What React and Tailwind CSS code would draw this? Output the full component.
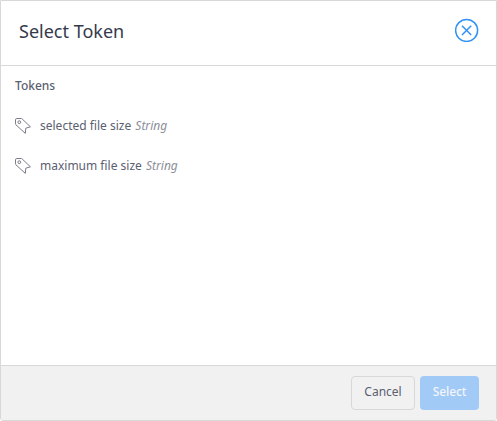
const tokens = [
  { name: 'selected file size', type: 'String' },
  { name: 'maximum file size', type: 'String' },
];

function TagIcon() {
  return (
    <svg className="size-4 shrink-0" viewBox="0 0 16 16" fill="none" stroke="#777b86" strokeWidth="1" strokeLinejoin="round">
      <path d="M0.5 1.8Q0.5 0.5 1.8 0.5H6.2Q6.7 0.5 7.1 0.9L15.4 8.8L10.8 10.2L10.3 15.4L1 6.9Q0.5 6.4 0.5 5.8Z" />
      <circle cx="4.3" cy="4.2" r="1.4" />
    </svg>
  );
}

function CloseIcon() {
  return (
    <svg className="size-6" viewBox="0 0 24 24" fill="none" stroke="#3193f5" strokeWidth="1.5">
      <circle cx="11.6" cy="12.4" r="11" />
      <path d="M7 7.8L16.2 17M16.2 7.8L7 17" />
    </svg>
  );
}

export default function App() {
  return (
    <div className="flex h-[421px] w-[497px] flex-col overflow-hidden rounded-b-[3px] border border-[#d8d8d8] bg-white font-['Noto_Sans',sans-serif] text-xs text-[#5b6070]">
      <header className="flex h-[65px] shrink-0 items-start justify-between border-b border-[#d8d8d8] pt-[17px] pr-[17px] pl-[18px]">
        <h1 className="text-lg leading-[26px] text-[#343a4c]">Select Token</h1>
        <button aria-label="Close"><CloseIcon /></button>
      </header>
      <main className="flex-1 pt-[11px] pl-3.5">
        <h2 className="mb-[11px] leading-[18px] font-medium">Tokens</h2>
        <ul>
          {tokens.map((token) => (
            <li key={token.name} className="flex h-10 items-center gap-[9px]">
              <TagIcon />
              <span>{token.name} <em className="ml-px text-[#8b8e97]">{token.type}</em></span>
            </li>
          ))}
        </ul>
      </main>
      <footer className="flex h-[55px] shrink-0 items-start justify-end gap-[5px] border-t border-[#d8d8d8] bg-[#f1f1f1] pt-2.5 pr-[17px]">
        <button className="h-[34px] w-16 rounded-[4px] border border-[#d8d8d8] pb-0.5">Cancel</button>
        <button className="h-[34px] w-[59px] rounded-[4px] bg-[#a2caf7] pb-0.5 font-medium tracking-[-0.1px] text-[#f2f5fa]">Select</button>
      </footer>
    </div>
  );
}
